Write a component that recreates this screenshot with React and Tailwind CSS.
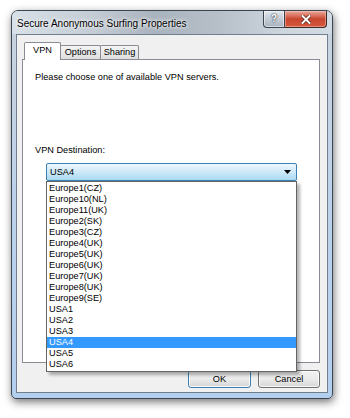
const items = [
  "Europe1(CZ)",
  "Europe10(NL)",
  "Europe11(UK)",
  "Europe2(SK)",
  "Europe3(CZ)",
  "Europe4(UK)",
  "Europe5(UK)",
  "Europe6(UK)",
  "Europe7(UK)",
  "Europe8(UK)",
  "Europe9(SE)",
  "USA1",
  "USA2",
  "USA3",
  "USA4",
  "USA5",
  "USA6",
];

function Tab({ label, active, w }) {
  if (active) {
    return (
      <div
        className={`relative z-10 -mb-px h-[18px] ${w} border border-b-0 border-[#898c95] bg-white rounded-t-[2px] flex items-start justify-center pt-[2px] leading-[11px]`}
      >
        {label}
      </div>
    );
  }
  return (
    <div
      className={`h-[14px] ${w} border border-b-0 border-[#898c95] bg-gradient-to-b from-[#f5f5f5] to-[#dedede] rounded-t-[2px] flex items-start justify-center pt-[1px] leading-[11px] -ml-px first:ml-0`}
    >
      {label}
    </div>
  );
}

export default function App() {
  return (
    <div className="w-[350px] h-[418px] bg-white pt-[10px] pl-[11px] font-['Liberation_Sans',Arial,sans-serif] text-black">
      <div className="relative w-[322px] h-[389px] flex flex-col rounded-t-[7px] rounded-b-[5px] border border-[#3a4653] bg-gradient-to-b from-[#c9d3dd] via-[#bcd2ea] to-[#b4cfee] shadow-[1px_3px_9px_rgba(0,0,0,0.55)] overflow-hidden">
        {/* title bar */}
        <div className="relative h-[23px] flex items-start pl-[5px] bg-[linear-gradient(90deg,#d8e0e8_0%,#c4ccd4_25%,#a9b3bd_45%,#b7c0c9_65%,#cdd5dd_85%,#d2dae3_100%)]">
          <span className="mt-[7px] text-[10px] leading-[12px] [text-shadow:0_0_5px_#ffffff,0_0_3px_#ffffff]">
            Secure Anonymous Surfing Properties
          </span>
          <div className="ml-auto mr-[5px] flex h-[17px]">
            <div className="w-[22px] h-[17px] border border-t-0 border-[#3b4551] rounded-bl-[4px] bg-gradient-to-b from-[#e3e8ee] via-[#c3cbd4] to-[#a9b4c0] flex items-center justify-center shadow-[inset_0_0_0_1px_rgba(255,255,255,0.5)]">
              <span className="text-[10px] font-bold leading-none text-white [text-shadow:0_0_1px_#2a3440,0_0_2px_#2a3440]">
                ?
              </span>
            </div>
            <div className="w-[42px] h-[17px] border border-t-0 border-l-0 border-[#3b2a26] rounded-br-[4px] bg-gradient-to-b from-[#e9a99c] via-[#c8462f] to-[#d6573e] flex items-center justify-center shadow-[inset_0_0_0_1px_rgba(255,210,200,0.45)]">
              <svg width="10" height="9" viewBox="0 0 10 9">
                <path
                  d="M1.5 1 L8.5 8 M8.5 1 L1.5 8"
                  stroke="#5a1e14"
                  strokeWidth="3.4"
                  strokeLinecap="square"
                />
                <path
                  d="M1.5 1 L8.5 8 M8.5 1 L1.5 8"
                  stroke="#ffffff"
                  strokeWidth="2"
                  strokeLinecap="square"
                />
              </svg>
            </div>
          </div>
        </div>

        {/* client area */}
        <div className="mx-[4px] mb-[5px] flex-1 border border-[#6f7f90] bg-[#f0f0f0] flex flex-col pl-[5px] pr-[7px] pt-[7px] pb-[4px] text-[9.2px]">
          {/* tabs */}
          <div className="h-[17px] flex items-end pl-[2px]">
            <Tab label="VPN" active w="w-[37px]" />
            <Tab label="Options" w="w-[41px]" />
            <Tab label="Sharing" w="w-[39px]" />
          </div>

          {/* panel */}
          <div className="h-[304px] border border-[#898c95] bg-white flex flex-col pl-[12px] pt-[11px]">
            <div className="leading-[12px]">Please choose one of available VPN servers.</div>
            <div className="leading-[12px] mt-[61px]">VPN Destination:</div>
            <div className="relative mt-[7px] ml-[11px] w-[251px]">
              <div className="h-[18px] border border-[#3c7fb1] rounded-[2px] bg-gradient-to-b from-[#eef8fe] via-[#cde9f8] to-[#a9d9f3] flex items-center pl-[3px] pr-[5px]">
                <span className="leading-[11px]">USA4</span>
                <svg className="ml-auto" width="7" height="4" viewBox="0 0 7 4">
                  <path d="M0 0 H7 L3.5 4 Z" fill="#000000" />
                </svg>
              </div>
              {/* dropdown list */}
              <div className="absolute left-0 top-full z-20 w-[251px] border border-[#646464] bg-white shadow-[3px_3px_3px_rgba(0,0,0,0.3)] pt-[1px] pb-[1px]">
                {items.map((it) => (
                  <div
                    key={it}
                    className={`h-[11px] leading-[11px] pl-[2px] ${
                      it === "USA4" ? "bg-[#3399ff] text-white" : ""
                    }`}
                  >
                    {it}
                  </div>
                ))}
              </div>
            </div>
          </div>

          {/* buttons */}
          <div className="mt-[7px] flex justify-end gap-[7px]">
            <div className="w-[63px] h-[18px] rounded-[3px] border border-[#3c7fb1] bg-gradient-to-b from-[#f2f2f2] via-[#ebebeb] to-[#d6d6d6] shadow-[inset_0_0_0_1px_rgba(255,255,255,0.8)] flex items-center justify-center leading-[11px]">
              OK
            </div>
            <div className="w-[62px] h-[18px] rounded-[3px] border border-[#707070] bg-gradient-to-b from-[#f2f2f2] via-[#ebebeb] to-[#d6d6d6] shadow-[inset_0_0_0_1px_rgba(255,255,255,0.8)] flex items-center justify-center leading-[11px]">
              Cancel
            </div>
          </div>
        </div>
      </div>
    </div>
  );
}
